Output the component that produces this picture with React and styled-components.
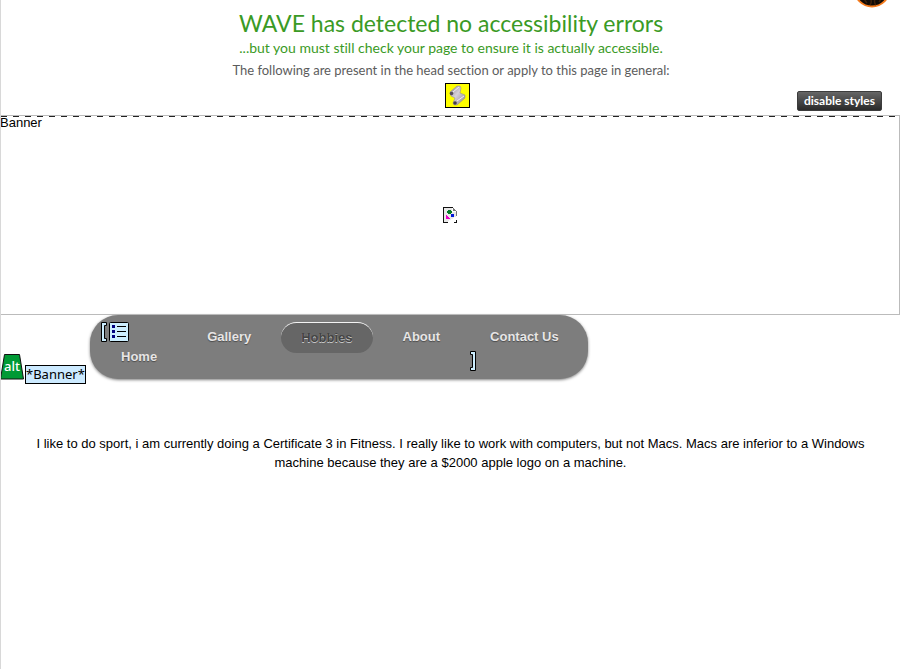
import React from "react";
import styled, { createGlobalStyle } from "styled-components";

const GlobalStyle = createGlobalStyle`
  * { box-sizing: border-box; }
  body {
    margin: 0;
    background: #fff;
    color: #000;
    font-family: "Liberation Sans", Arial, sans-serif;
    font-size: 13px;
  }
`;

const Page = styled.div`
  min-height: 100vh;
  border-left: 1px solid #d8d8d8;
  overflow: hidden;
`;

const Report = styled.header`
  position: relative;
  display: flex;
  flex-direction: column;
  align-items: center;
  height: 115px;
  margin-left: -1px;
  padding-top: 8px;
  border-left: 1px solid #bbb;
  font-family: Lato, "Open Sans", sans-serif;
  font-variant-ligatures: none;
  text-align: center;
`;

const Title = styled.h1`
  margin: 0;
  font-size: 23px;
  line-height: 30px;
  font-weight: 400;
  color: #3a9a25;
`;

const Subtitle = styled.p`
  margin: 0;
  font-size: 14px;
  line-height: 20px;
  color: #3a9a25;
`;

const Note = styled.p`
  margin: 2px 0 0;
  font-size: 13px;
  line-height: 20px;
  color: #5c5c5c;
`;

const ScriptIcon = styled.svg`
  display: block;
  margin: 3px 0 0 12px;
`;

const Orb = styled.svg`
  position: absolute;
  top: -30px;
  right: 10px;
`;

const StylesButton = styled.button`
  position: absolute;
  right: 19px;
  bottom: 4px;
  width: 85px;
  height: 20px;
  padding: 0;
  border: 1px solid #3c3c3c;
  border-radius: 2px;
  background: linear-gradient(#666, #2a2a2a);
  color: #fff;
  font: 700 12px/18px Lato, sans-serif;
`;

const Banner = styled.section`
  position: relative;
  display: flex;
  align-items: center;
  justify-content: center;
  height: 200px;
  margin: 0 1px 0 -1px;
  border: 1px solid #bbb;
`;

const BannerEdge = styled.div`
  position: absolute;
  top: 0;
  left: 0;
  right: 0;
  height: 1px;
  background: repeating-linear-gradient(90deg, #222 0 6px, transparent 6px 12px);
`;

const BannerLabel = styled.span`
  position: absolute;
  top: 0;
  left: -1px;
  line-height: 13px;
`;

const NavRow = styled.div`
  display: flex;
  align-items: flex-start;
  height: 122px;
  margin-left: -1px;
  border-left: 1px solid #bbb;
`;

const AltMarker = styled.div`
  display: flex;
  align-items: flex-start;
  width: 89px;
  padding-top: 39px;
  font-family: "Noto Sans", "Open Sans", sans-serif;
`;

const AltBadge = styled.svg`
  flex: none;
  margin-left: -1px;
  font: 500 13px "Noto Sans", sans-serif;
`;

const AltText = styled.span`
  height: 19px;
  margin-top: 11px;
  border: 1px solid #000;
  background: #cceaff;
  font-size: 13px;
  line-height: 17px;
`;

const Nav = styled.nav`
  display: flex;
  gap: 10px;
  height: 64px;
  padding: 7px 9px 7px 11px;
  border-radius: 28px;
  background: #7d7d7d;
  box-shadow: 0 1px 3px rgba(0, 0, 0, 0.5);
`;

const NavItem = styled.div`
  display: flex;
  flex-direction: column;
  align-items: flex-start;
`;

const NavLink = styled.a`
  height: ${(p) => (p.$stacked ? "28px" : "31px")};
  padding: 0 20px;
  border-radius: 16px;
  border-top: 1px solid ${(p) => (p.$active ? "#f4f4f4" : "transparent")};
  background: ${(p) => (p.$active ? "#666" : "transparent")};
  color: ${(p) => (p.$active ? "#444" : "#e7e5e5")};
  font-weight: 700;
  line-height: ${(p) => (p.$active ? "30px" : "28px")};
  white-space: nowrap;
  text-decoration: none;
  text-shadow: ${(p) =>
    p.$active ? "0 1px 0 rgba(255,255,255,.65)" : "0 1px 1px rgba(0,0,0,.4)"};
`;

const Markers = styled.span`
  display: flex;
  gap: 2px;
  height: 20px;
`;

const EndMarker = styled(Markers)`
  margin-top: -2px;
`;

const Content = styled.main`
  padding: 0 20px;
  margin-left: -1px;
  font-size: 13px;
  line-height: 19px;
  text-align: center;

  p { margin: -3px 0 0; }
`;

function Bracket({ end }) {
  const d = end ? "M.5 .5H5.5V19.5H.5V16.5H2.5V3.5H.5Z" : "M5.5 .5H.5V19.5H5.5V16.5H3.5V3.5H5.5Z";
  return (
    <svg width="6" height="20" aria-hidden="true">
      <path d={d} fill="#cceeff" stroke="#000" />
    </svg>
  );
}

function ListMark() {
  return (
    <svg width="20" height="20" role="img" aria-label="Unordered list">
      <rect x=".5" y=".5" width="19" height="19" rx="1" fill="#cceeff" stroke="#000" />
      <path d="M3 3h3v3H3zM3 8h3v3H3zM3 13h3v3H3z" fill="#000080" />
      <path d="M8 4.500h9M8 9.500h9M8 14.500h9" stroke="#000" />
    </svg>
  );
}

const links = [
  { label: "Home", first: true },
  { label: "Gallery" },
  { label: "Hobbies", active: true },
  { label: "About" },
  { label: "Contact Us", last: true },
];

export default function App() {
  return (
    <Page>
      <GlobalStyle />
      <Report>
        <Title>WAVE has detected no accessibility errors</Title>
        <Subtitle>...but you must still check your page to ensure it is actually accessible.</Subtitle>
        <Note>The following are present in the head section or apply to this page in general:</Note>
        <ScriptIcon width="25" height="25" role="img" aria-label="Script">
          <defs>
            <linearGradient id="paper" x1="0" y1="0" x2="1" y2="1">
              <stop offset="0" stopColor="#8e8892" />
              <stop offset=".45" stopColor="#d6d0d8" />
              <stop offset="1" stopColor="#8a828d" />
            </linearGradient>
          </defs>
          <rect x=".5" y=".5" width="24" height="24" fill="#ff0" stroke="#000" />
          <path d="M5 9 12 3h3l1 2-1 5 5 2v3l-8 7H9l-1-2 2-5-4-2z" fill="url(#paper)" stroke="#8b848c" strokeWidth=".5" />
          <path d="m8 9 6-5M12 18l7-5" stroke="#f1edf3" strokeWidth="1" />
          <circle cx="6.500" cy="10.500" r="1.800" fill="#554d58" />
          <circle cx="10" cy="20" r="1.800" fill="#443d47" />
        </ScriptIcon>
        <Orb width="38" height="38" viewBox="0 0 38 38" aria-hidden="true">
          <circle cx="19" cy="19" r="17.500" fill="#100b07" stroke="#f47a1c" strokeWidth="2" />
          <path d="M10 24q1 6 4 9M16 27q4 4 1 8M23 27q-3 5 0 8M29 24q-1 6-3 8" fill="none" stroke="#3d210c" strokeWidth="1.500" />
        </Orb>
        <StylesButton type="button">disable styles</StylesButton>
      </Report>
      <Banner>
        <BannerEdge />
        <BannerLabel>Banner</BannerLabel>
        <svg width="14" height="16" role="img" aria-label="Missing picture" shapeRendering="crispEdges">
          <path d="M1 1h8v4h4v5h-2v1h-1v1H8v1H6v1H5v1H1z" fill="#e8e8e8" />
          <path d="M0 0h10v1H1v14h4v1H0zM11 15h3v1h-3z" fill="#111" />
          <path d="M9 1h1v3h3V3h-1V2h-1V1zM13 4h1v5h-1z" fill="#777" />
          <path d="M5 3h3v4H5zM4 4h5v2H4z" fill="#007a25" />
          <path d="M3 8h1v1h1v1h1v1h1v1H3z" fill="#e800c8" />
          <path d="M8 7h3v3H8z" fill="#0018d8" />
          <path d="M13 13h1v3h-1z" fill="#111" />
        </svg>
      </Banner>
      <NavRow>
        <AltMarker>
          <AltBadge width="25" height="26" role="img" aria-label="Alternative text">
            <path d="M4.500 .5h15l4 24.500H.5z" fill="#009a35" stroke="#111" />
            <text x="12" y="17" fill="#fff" textAnchor="middle">alt</text>
          </AltBadge>
          <AltText>*Banner*</AltText>
        </AltMarker>
        <Nav>
          {links.map((l) => (
            <NavItem key={l.label}>
              {l.first && <Markers><Bracket /><ListMark /></Markers>}
              <NavLink href="#" $active={l.active} $stacked={l.first} aria-current={l.active ? "page" : undefined}>
                {l.label}
              </NavLink>
              {l.last && <EndMarker><Bracket end /></EndMarker>}
            </NavItem>
          ))}
        </Nav>
      </NavRow>
      <Content>
        <p>
          I like to do sport, i am currently doing a Certificate 3 in Fitness. I really like to work with
          computers, but not Macs. Macs are inferior to a Windows machine because they are a $2000 apple
          logo on a machine.
        </p>
      </Content>
    </Page>
  );
}
